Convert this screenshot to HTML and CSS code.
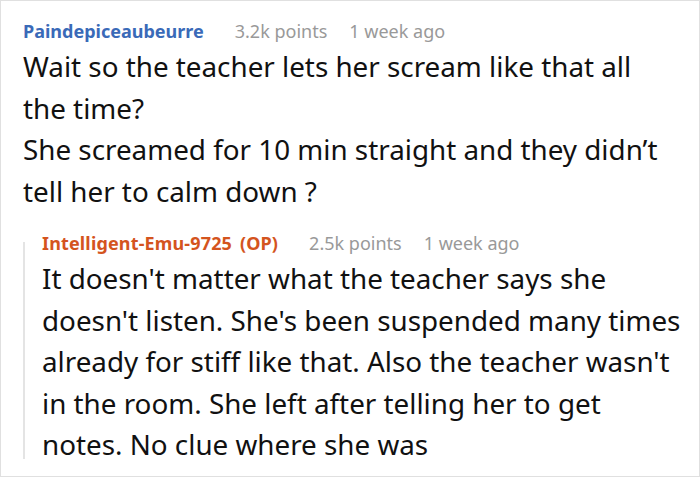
FILE: index.html
```html
<!DOCTYPE html>
<html>
<head>
<meta charset="utf-8">
<link rel="stylesheet" href="styles.css">
</head>
<body>
<div class="frame">
  <div class="comment">
    <div class="meta">
      <span class="user user-blue">Paindepiceaubeurre</span>
      <span class="info">3.2k points</span>
      <span class="info">1 week ago</span>
    </div>
    <div class="body body-main">Wait so the teacher lets her scream like that all the time?<br>She screamed for 10 min straight and they didn’t tell her to calm down ?</div>
    <div class="reply">
      <div class="reply-line"></div>
      <div class="reply-content">
        <div class="meta">
          <span class="user user-orange">Intelligent-Emu-9725 <span class="op">(OP)</span></span>
          <span class="info">2.5k points</span>
          <span class="info">1 week ago</span>
        </div>
        <div class="body">It doesn't matter what the teacher says she doesn't listen. She's been suspended many times already for stiff like that. Also the teacher wasn't in the room. She left after telling her to get notes. No clue where she was</div>
      </div>
    </div>
  </div>
</div>
</body>
</html>
```

FILE: styles.css
```css
html, body {
  margin: 0;
  padding: 0;
  background: #fff;
}
.frame {
  box-sizing: border-box;
  width: 700px;
  height: 477px;
  border: 1px solid #e0e0e0;
  padding: 15px 16px 0 22px;
  font-family: "Noto Sans", "Open Sans", sans-serif;
  color: #111;
}
.meta {
  display: flex;
  align-items: baseline;
  gap: 22px;
  font-size: 18px;
  line-height: 30px;
}
.user {
  font-weight: 700;
  margin-right: 9px;
  white-space: nowrap;
}
.user-blue { color: #3a6ab8; }
.user-orange {
  color: #d4541e;
  letter-spacing: 0.15px;
}
.op {
  margin-left: 3px;
}
.info { color: #999; }
.body {
  font-size: 27.8px;
  line-height: 41.5px;
}
.body-main {
  margin-right: 6px;
}
.reply {
  display: flex;
  margin-top: 16px;
}
.reply-line {
  flex: none;
  width: 2px;
  margin: 14px 0 7px;
  background: #e4e4e4;
}
.reply-content {
  flex: 1;
  padding-left: 17px;
}
```
